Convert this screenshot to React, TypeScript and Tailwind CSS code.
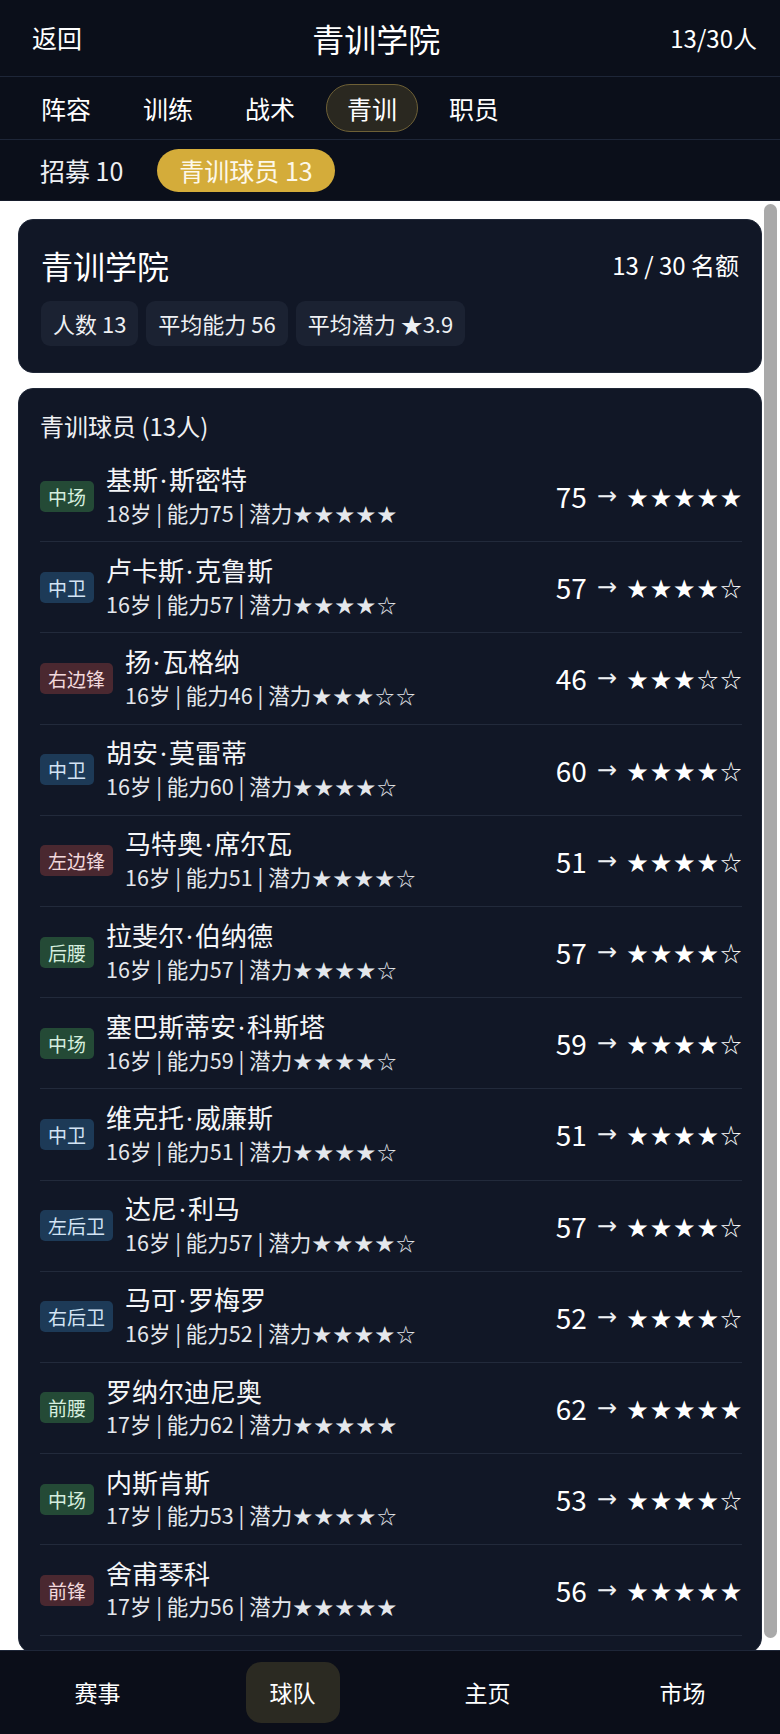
import React from 'react';

type Tone = 'mid' | 'def' | 'att';

interface Player {
  pos: string;
  tone: Tone;
  name: string;
  age: number;
  ability: number;
  potential: number;
}

const players: Player[] = [
  { pos: '中场', tone: 'mid', name: '基斯·斯密特', age: 18, ability: 75, potential: 5 },
  { pos: '中卫', tone: 'def', name: '卢卡斯·克鲁斯', age: 16, ability: 57, potential: 4 },
  { pos: '右边锋', tone: 'att', name: '扬·瓦格纳', age: 16, ability: 46, potential: 3 },
  { pos: '中卫', tone: 'def', name: '胡安·莫雷蒂', age: 16, ability: 60, potential: 4 },
  { pos: '左边锋', tone: 'att', name: '马特奥·席尔瓦', age: 16, ability: 51, potential: 4 },
  { pos: '后腰', tone: 'mid', name: '拉斐尔·伯纳德', age: 16, ability: 57, potential: 4 },
  { pos: '中场', tone: 'mid', name: '塞巴斯蒂安·科斯塔', age: 16, ability: 59, potential: 4 },
  { pos: '中卫', tone: 'def', name: '维克托·威廉斯', age: 16, ability: 51, potential: 4 },
  { pos: '左后卫', tone: 'def', name: '达尼·利马', age: 16, ability: 57, potential: 4 },
  { pos: '右后卫', tone: 'def', name: '马可·罗梅罗', age: 16, ability: 52, potential: 4 },
  { pos: '前腰', tone: 'mid', name: '罗纳尔迪尼奥', age: 17, ability: 62, potential: 5 },
  { pos: '中场', tone: 'mid', name: '内斯肯斯', age: 17, ability: 53, potential: 4 },
  { pos: '前锋', tone: 'att', name: '舍甫琴科', age: 17, ability: 56, potential: 5 },
];

const toneClass: Record<Tone, string> = {
  mid: 'bg-[#244a36] text-[#d6eedf]',
  def: 'bg-[#1d3a57] text-[#d3e4f5]',
  att: 'bg-[#4a2830] text-[#f2d8dc]',
};

const stars = (n: number) => '★'.repeat(n) + '☆'.repeat(5 - n);

const tabs = ['阵容', '训练', '战术', '青训', '职员'];
const navItems = ['赛事', '球队', '主页', '市场'];

// the CJK font draws "·" full width, the reference has a narrow dot
function PlayerName({ name }: { name: string }) {
  const parts = name.split('·');
  return (
    <>
      {parts.map((part, i) => (
        <React.Fragment key={i}>
          {i > 0 && <span className="mx-[2px] font-['Noto_Sans',sans-serif]">·</span>}
          {part}
        </React.Fragment>
      ))}
    </>
  );
}

function PlayerRow({ p }: { p: Player }) {
  return (
    <div className="flex h-[91.2px] items-center border-b border-[#222a3b]">
      <span className={`shrink-0 rounded-[5px] px-[8px] text-[19px] leading-[31px] ${toneClass[p.tone]}`}>
        {p.pos}
      </span>
      <div className="ml-[12px] flex min-w-0 flex-1 flex-col">
        <span className="text-[26px] leading-[32px] text-[#f5f6f8]">
          <PlayerName name={p.name} />
        </span>
        <span className="mt-[1px] whitespace-nowrap text-[21.5px] leading-[32px] text-[#e4e7ec]">
          {p.age}岁 | 能力{p.ability} | 潜力
          <span className="ml-[1px] text-[19px] tracking-[2px]">{stars(p.potential)}</span>
        </span>
      </div>
      <div className="flex shrink-0 items-center whitespace-nowrap text-white">
        <span className="text-[28px] leading-[36px]">{p.ability}</span>
        <span className="ml-[10px] font-['DejaVu_Sans',sans-serif] text-[24px] leading-[36px] text-[#eef0f3]">→</span>
        <span className="-mr-[2px] ml-[10px] text-[21px] leading-[36px] tracking-[2.4px]">{stars(p.potential)}</span>
      </div>
    </div>
  );
}

export default function App() {
  return (
    <div className="flex h-[1734px] w-[780px] flex-col overflow-hidden bg-white font-['Noto_Sans_CJK_SC','Noto_Sans',sans-serif] text-white">
      {/* Top bar */}
      <div className="flex h-[77px] shrink-0 items-center justify-between border-b border-[#1e2638] bg-[#0b0f1a] pl-[32px] pr-[23px]">
        <span className="text-[25px]">返回</span>
        <span className="text-[32px]">青训学院</span>
        <span className="text-[24px]">13/30人</span>
      </div>

      {/* Tabs */}
      <div className="flex h-[63px] shrink-0 items-center gap-[10px] border-b border-[#1e2638] bg-[#0b0f1a] pl-[20px]">
        {tabs.map((t) => (
          <span
            key={t}
            className={`rounded-full border px-[20px] text-[25px] leading-[46px] ${
              t === '青训' ? 'border-[#6e6036] bg-[#2a2820]' : 'border-transparent'
            }`}
          >
            {t}
          </span>
        ))}
      </div>

      {/* Sub tabs */}
      <div className="flex h-[61px] shrink-0 items-center gap-3 border-b border-[#161c2b] bg-[#0b0f1a] pl-[18px]">
        <span className="px-[22px] text-[25px] leading-[43px] text-[#eef0f3]">招募 10</span>
        <span className="rounded-full bg-[#d4ac3a] px-[22px] text-[25px] leading-[43px] text-[#fdf8ea]">青训球员 13</span>
      </div>

      {/* Content + scrollbar */}
      <div className="flex min-h-0 flex-1 bg-white">
        <div className="min-h-0 flex-1 overflow-hidden pl-[18px] pt-[18px]">
          {/* Summary card */}
          <div className="rounded-[15px] border border-[#1f2737] bg-[#111726] px-[22px] pb-[26px] pt-[23px]">
            <div className="flex items-center justify-between">
              <span className="text-[32px] leading-[44px]">青训学院</span>
              <span className="text-[24px] leading-[44px]">13 / 30 名额</span>
            </div>
            <div className="mt-[14px] flex gap-[8px]">
              <span className="rounded-[9px] bg-[#1b2232] px-[12px] text-[22px] leading-[45px] text-[#eef0f3]">人数 13</span>
              <span className="rounded-[9px] bg-[#1b2232] px-[12px] text-[22px] leading-[45px] text-[#eef0f3]">平均能力 56</span>
              <span className="rounded-[9px] bg-[#1b2232] px-[12px] text-[22px] leading-[45px] text-[#eef0f3]">平均潜力 ★3.9</span>
            </div>
          </div>

          {/* Player list */}
          <div className="mt-[15px] rounded-[15px] border border-[#1f2737] bg-[#111726] pb-[16px] pl-[21px] pr-[19px] pt-[19px]">
            <div className="mb-[7px] text-[24px] leading-[36px] text-[#eef0f3]">青训球员 (13人)</div>
            {players.map((p, i) => (
              <PlayerRow key={i} p={p} />
            ))}
          </div>
        </div>
        <div className="w-[18px] shrink-0 pl-[2px] pr-[3px] pt-[3px]">
          <div className="h-[1434px] rounded-full bg-[#a9a9a9]" />
        </div>
      </div>

      {/* Bottom nav */}
      <div className="grid h-[84px] shrink-0 grid-cols-4 items-center border-t border-[#1e2638] bg-[#0b0e19]">
        {navItems.map((n) => (
          <div key={n} className="flex justify-center">
            <span
              className={`rounded-[15px] px-[24px] text-[23px] leading-[61px] ${
                n === '球队' ? 'bg-[#2b2a22]' : ''
              }`}
            >
              {n}
            </span>
          </div>
        ))}
      </div>
    </div>
  );
}
